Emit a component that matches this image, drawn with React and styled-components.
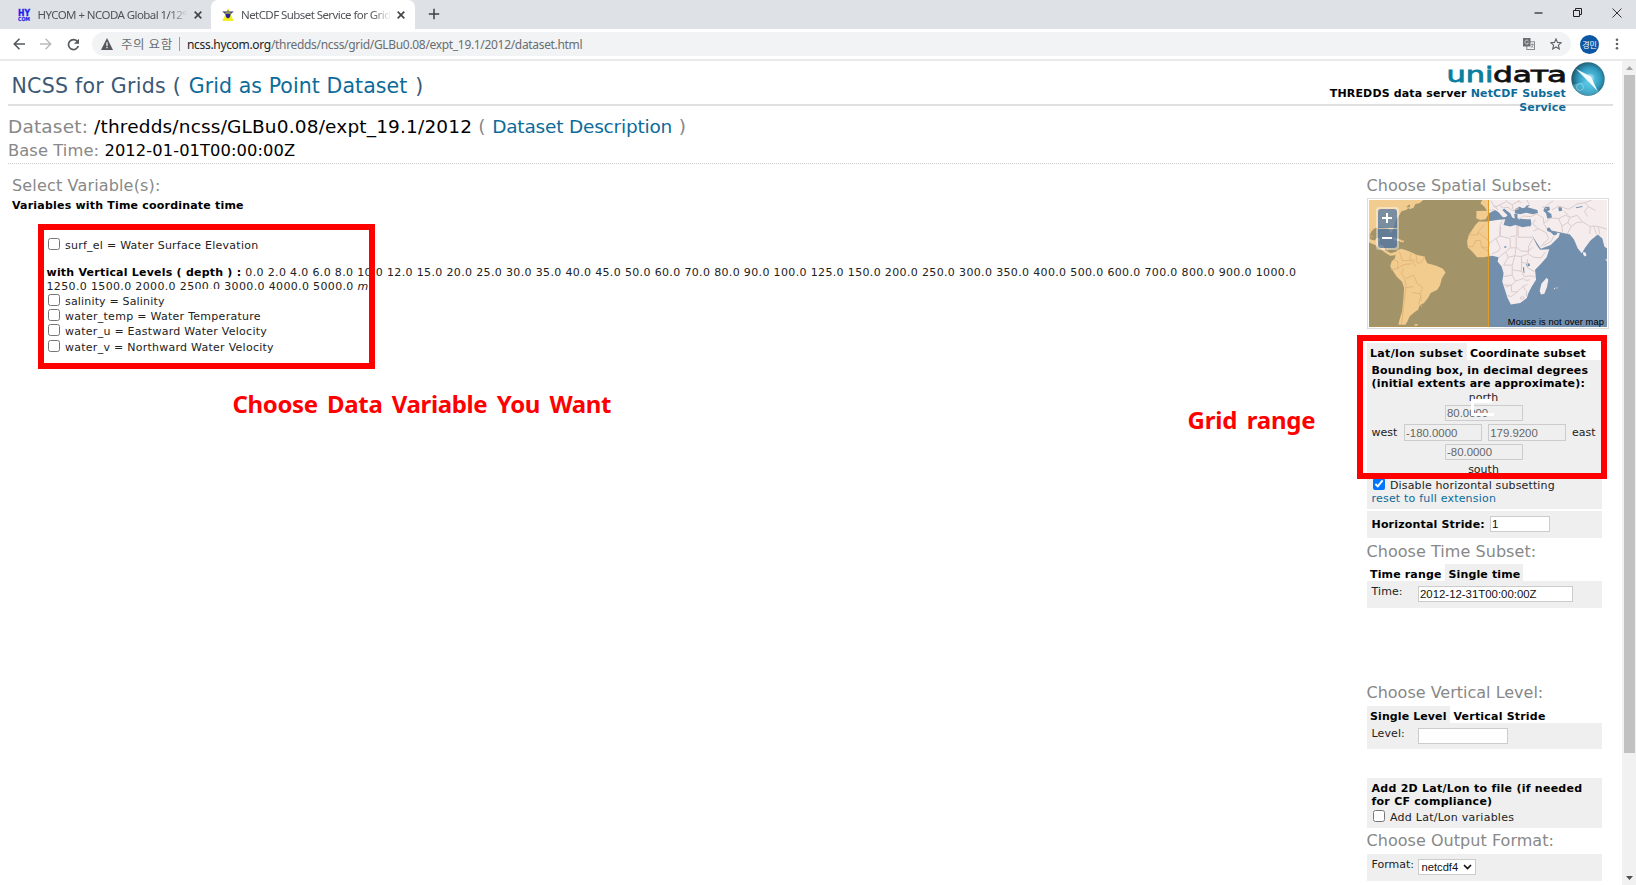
import React from "react";
import styled, { createGlobalStyle } from "styled-components";

const Global = createGlobalStyle`
  * { box-sizing: border-box; }
  html, body { margin: 0; padding: 0; background: #fff; }
  body { overflow: hidden; }
`;

const VERDANA = `Verdana, "DejaVu Sans", sans-serif`;
const UI = `"Malgun Gothic", "Noto Sans", "Noto Sans CJK KR", sans-serif`;

const Window = styled.div`
  position: relative;
  width: 1636px;
  height: 885px;
  overflow: hidden;
  display: flex;
  flex-direction: column;
  background: #fff;
  font-family: ${VERDANA};
  font-size: 11px;
  color: #222;
`;

/* ---------- browser chrome ---------- */
const TabStrip = styled.div`
  flex: none;
  display: flex;
  height: 29px;
  background: #dee1e6;
  font-family: ${UI};
`;
const BrowserTab = styled.div`
  display: flex;
  align-items: center;
  width: ${(p) => p.$width}px;
  padding-left: ${(p) => p.$pad}px;
  background: ${(p) => (p.$active ? "#fff" : "transparent")};
  border-radius: 7px 7px 0 0;
  svg { flex: none; overflow: visible; }
`;
const TabTitle = styled.span`
  width: 149px;
  margin-left: ${(p) => p.$gap}px;
  overflow: hidden;
  white-space: nowrap;
  font-size: 11.5px;
  line-height: 20px;
  letter-spacing: ${(p) => p.$ls}px;
  color: #505357;
  mask-image: linear-gradient(90deg, #000 88%, transparent 101%);
`;
const CloseIcon = styled.svg`
  margin-left: 7px;
`;
const NewTab = styled.svg`
  margin: 8px 0 0 13px;
`;
const WindowControls = styled.div`
  display: flex;
  align-items: center;
  gap: 30px;
  margin: 0 14px 4px auto;
`;
const Toolbar = styled.div`
  flex: none;
  display: flex;
  align-items: center;
  height: 32px;
  padding: 0 0 0 13px;
  border-bottom: 2px solid #e9eaeb;
  font-family: ${UI};
`;
const NavButtons = styled.div`
  display: flex;
  align-items: center;
  gap: 15px;
  width: 79px;
`;
const Omnibox = styled.div`
  display: flex;
  align-items: center;
  width: 1479px;
  height: 24px;
  padding: 0 9px 0 9px;
  border-radius: 12px;
  background: #f1f3f4;
  font-size: 12px;
  letter-spacing: ${(p) => p.$ls}px;
  color: #6a6e72;
`;
const Warning = styled.span`
  margin-left: 8px;
  width: 59px;
  line-height: 14px;
  border-right: 1px solid #9a9da0;
  font-family: "Noto Sans CJK KR", sans-serif;
  font-size: 12.5px;
  letter-spacing: 0.6px;
  white-space: nowrap;
`;
const Url = styled.span`
  margin-left: 7px;
  b { font-weight: 400; color: #222; }
`;
const OmniActions = styled.div`
  display: flex;
  align-items: center;
  gap: 15px;
  margin-left: auto;
`;
const Avatar = styled.div`
  display: grid;
  place-items: center;
  width: 19px;
  height: 19px;
  margin-left: 9px;
  border-radius: 50%;
  background: #0b57a4;
  color: #fff;
  font: 8px "Noto Sans CJK KR", sans-serif;
`;
const MenuDots = styled.svg`
  margin-left: 15px;
`;

/* ---------- page ---------- */
const Viewport = styled.div`
  flex: 1;
  min-height: 0;
  display: flex;
`;
const Page = styled.main`
  width: 1613px;
  padding-left: 8px;
`;
const Scrollbar = styled.div`
  display: flex;
  flex-direction: column;
  align-items: center;
  justify-content: space-between;
  width: 14px;
  margin-left: auto;
  padding: 5px 0 5px;
  background: #f1f1f1;
`;
const Thumb = styled.div`
  width: 11px;
  height: 678px;
  margin: 5px 0 auto;
  background: #c1c1c1;
`;
const Header = styled.header`
  display: flex;
  justify-content: space-between;
  height: 45px;
  border-bottom: 2px solid #e0e0e0;
`;
const Title = styled.h1`
  margin: 0;
  padding: 8px 0 0 3.5px;
  font-size: 20.5px;
  line-height: 35px;
  font-weight: 400;
  letter-spacing: ${(p) => p.$ls}px;
  color: #3b5874;
`;
const Link = styled.a`
  color: #0d6b99;
`;
const TitleLink = styled(Link)`
  margin: 0 ${(p) => p.$gap}px;
  letter-spacing: ${(p) => p.$ls}px;
`;
const Brand = styled.div`
  display: flex;
  align-items: flex-start;
  gap: 4.5px;
  height: 54px;
  margin-right: 8.5px;
`;
const BrandText = styled.div`
  display: flex;
  flex-direction: column;
  align-items: flex-end;
  width: 245px;
  svg { overflow: visible; }
`;
const Tagline = styled.div`
  margin-top: 3px;
  text-align: right;
  font-size: 11px;
  line-height: 13.5px;
  font-weight: 700;
  letter-spacing: ${(p) => p.$ls}px;
  color: #000;
`;
const Info = styled.section`
  padding-top: 9px;
  height: 58px;
  border-bottom: 1px dotted #ccc;
  color: #888;
`;
const InfoLine = styled.div`
  height: ${(p) => p.$h}px;
  margin-bottom: 1px;
  font-size: ${(p) => p.$size}px;
  line-height: ${(p) => p.$h}px;
  letter-spacing: ${(p) => p.$ls}px;
  b { font-weight: 400; color: #000; }
`;
const Columns = styled.div`
  display: flex;
  padding-top: 12px;
`;
const Variables = styled.section`
  width: 1358.5px;
  padding-left: 4px;
`;
const Subsets = styled.section`
  width: 242px;
`;
const SectionTitle = styled.h2`
  height: 20px;
  margin: ${(p) => p.$top || 0}px 0 0;
  font-size: 16px;
  line-height: 20px;
  font-weight: 400;
  letter-spacing: ${(p) => p.$ls || 0}px;
  white-space: nowrap;
  color: #888;
`;
const Strong = styled.div`
  margin-top: ${(p) => p.$top || 0}px;
  font-weight: 700;
  line-height: ${(p) => p.$lh || 13.5}px;
  letter-spacing: ${(p) => p.$ls || 0}px;
  white-space: nowrap;
  color: #000;
`;
const VariableList = styled.div`
  margin: 25px 0 0 35px;
`;
const CheckRow = styled.label`
  display: flex;
  height: ${(p) => p.$h || 15.33}px;
  margin-top: ${(p) => p.$top || 0}px;
  padding-left: 1px;
  line-height: 15.33px;
  letter-spacing: ${(p) => p.$ls || 0}px;
  white-space: nowrap;
`;
const CheckBox = styled.input.attrs({ type: "checkbox", readOnly: true })`
  flex: none;
  width: 12px;
  height: 12px;
  margin: 0 ${(p) => p.$gap || 5}px 0 0;
`;
const Levels = styled.div`
  width: 1290px;
  margin: 13px 0 0.5px -0.5px;
  line-height: 13.5px;
  letter-spacing: ${(p) => p.$ls}px;
  white-space: pre-line;
  b { color: #000; letter-spacing: ${(p) => p.$bls}px; }
`;
const MapFrame = styled.div`
  position: relative;
  width: 242px;
  height: 131px;
  margin-top: 2px;
  padding: 1px;
  border: 1px solid #ddd;
  > svg { display: block; }
`;
const MapCaption = styled.div`
  position: absolute;
  right: 3.5px;
  bottom: 0;
  font: 9.3px "Liberation Sans", Arial, sans-serif;
  letter-spacing: ${(p) => p.$ls}px;
  line-height: 11px;
  color: #000;
`;
const ZoomControl = styled.div`
  position: absolute;
  left: 8px;
  top: 8px;
  display: grid;
  gap: 1px;
  padding: 2px;
  border-radius: 3px;
  background: rgba(255, 255, 255, 0.4);
`;
const ZoomButton = styled.div`
  display: grid;
  place-items: center;
  width: 19px;
  height: 19px;
  border-radius: ${(p) => (p.$first ? "3px 3px 0 0" : "0 0 3px 3px")};
  background: rgba(0, 60, 136, 0.5);
  svg { margin-bottom: 2px; }
`;
const Tabs = styled.div`
  display: flex;
  height: 17px;
  margin-top: ${(p) => p.$top}px;
`;
const FormTab = styled.div`
  width: ${(p) => p.$width}px;
  padding: 4px 0 0 3.5px;
  background: ${(p) => (p.$active ? "#efefef" : "transparent")};
  font-weight: 700;
  line-height: 13px;
  letter-spacing: ${(p) => p.$ls || 0}px;
  white-space: nowrap;
  color: #000;
`;
const Panel = styled.div`
  width: 235px;
  height: ${(p) => p.$h}px;
  margin-top: ${(p) => p.$top || 0}px;
  padding: ${(p) => p.$pad || 4}px 0 0 5px;
  background: #efefef;
  line-height: 13.5px;
`;
const Bounds = styled.div`
  display: flex;
  flex-direction: column;
  align-items: center;
  width: 224px;
  height: 86px;
`;
const South = styled.span`
  margin-top: 3px;
`;
const BoundsRow = styled.div`
  display: flex;
  justify-content: space-between;
  align-items: center;
  width: 224px;
  margin: 3px 0;
`;
const Field = styled.input.attrs({ readOnly: true })`
  flex: none;
  width: ${(p) => p.$w}px;
  height: ${(p) => p.$h || 16}px;
  margin: ${(p) => p.$top || 0}px 0 0;
  padding: 0 2px 0 1.5px;
  border: 1px solid #ccc;
  border-radius: 0;
  background: ${(p) => (p.disabled ? "#efefef" : "#fff")};
  color: ${(p) => (p.disabled ? "#666" : "#111")};
  font: 11.4px "Liberation Sans", Arial, sans-serif;
`;
const Labeled = styled.div`
  display: flex;
  align-items: flex-start;
`;
const Label = styled.span`
  width: ${(p) => p.$w}px;
  margin-top: ${(p) => p.$top || 0}px;
  font-weight: ${(p) => (p.$bold ? 700 : 400)};
  letter-spacing: ${(p) => p.$ls || 0}px;
  white-space: nowrap;
  color: ${(p) => (p.$bold ? "#000" : "#222")};
`;
const ResetLink = styled(Link)`
  letter-spacing: 0.2px;
`;
const Select = styled.div`
  display: flex;
  align-items: center;
  justify-content: space-between;
  width: 58px;
  height: 16px;
  margin-top: 1px;
  padding: 0 3px;
  border: 1px solid #ccc;
  background: #fff;
  color: #111;
  font: 11.2px "Liberation Sans", Arial, sans-serif;
`;

/* ---------- annotations laid over the page ---------- */
const Marker = styled.div`
  position: absolute;
  left: ${(p) => p.$x}px;
  top: ${(p) => p.$y}px;
  width: ${(p) => p.$w}px;
  height: ${(p) => p.$h}px;
  border: 6px solid #f00;
`;
const Note = styled.div`
  position: absolute;
  left: ${(p) => p.$x}px;
  top: ${(p) => p.$y}px;
  color: #f00;
  font: 700 24px/32px "Malgun Gothic", "Noto Sans", sans-serif;
  letter-spacing: ${(p) => p.$ls}px;
  word-spacing: 3.5px;
  white-space: nowrap;
`;
const Patch = styled.div`
  position: absolute;
  left: ${(p) => p.$x}px;
  top: ${(p) => p.$y}px;
  width: ${(p) => p.$w}px;
  height: ${(p) => p.$h}px;
  background: #fff;
`;

const Close = () => (
  <CloseIcon width="8" height="8" viewBox="0 0 7 7">
    <path d="M.6.6l5.8 5.8M6.4.6L.6 6.4" stroke="#404347" strokeWidth="1.4" />
  </CloseIcon>
);

const WorldMap = () => (
  <svg width="238" height="127" viewBox="84 90 718 382" preserveAspectRatio="none">
    <rect x="84" y="90" width="718" height="382" fill="#728fae" />
    <g fill="#f5eded">
      <path d="M84 90H226L218 98 205 104 196 112 206 112 196 120 182 124 174 138 165 150 158 175 150 190 142 176 118 172 100 176 92 184 86 196 88 208 100 212 108 204 118 204 114 222 128 228 134 242 150 250 165 246 172 250 162 256 148 258 132 248 116 236 104 226 84 218Z" />
      <path d="M204 96l10-6h34l-12 10-12 2-6 12-14 4 4-12zM150 202l16 2 16 6-4 4-16-2zM178 212l12 0-2 5-10-1z" />
      <path d="M167 243l13-6 12 3 20 7 15 8 23 5 10 20 27 8 20 9 8 11-11 17-6 22-8 13-20 10-8 15-12 15-13 7-5 13-10 7-15 13-7 15-6 10H173l3-15 8-25 4-40 2-30-6-18-17-17-13-20-6-10 4-15 10-10zM222 464l10-1-3 5-8 0z" />
      <path d="M405 165L415 155 440 155 470 150 495 148 490 165 510 170 525 165 548 172 568 168 572 185 580 205 590 225 600 240 628 238 620 262 600 285 585 300 588 330 575 350 565 370 560 385 540 400 512 404 502 385 494 360 486 335 490 310 484 290 472 275 475 262 455 258 430 262 410 262 395 245 382 232 380 215 385 195 395 180Z" />
      <path d="M426 90L420 100 432 110 440 122 408 123 408 146 420 150 436 148 446 130 464 120 474 126 488 142 497 141 502 136 486 120 492 116 510 130 516 143 524 146 522 132 532 130 532 146 560 148 572 148 574 164 564 178 578 200 602 237 632 225 656 202 660 190 640 186 630 178 618 172 634 182 674 190 690 194 702 208 714 236 726 250 736 234 752 212 774 194 788 206 794 230 802 236V90Z" />
      <path d="M612 333l8-9 5 6-4 22-8 20-10 2-4-10 5-22zM730 246l8 3 2 8-5 3-5-6zM790 262l6 4 6 10v-6zM642 353l4 3-4 3zM650 352l4 3-4 2z" />
    </g>
    <g fill="#728fae">
      <path d="M524 118l14-8 10 5 8-3 2-5 12-3-8 8 30 8 2 9-16 4-20-5-18 5-16-4zM614 110l14 0 2 10-8 4 12 8 2 12-14 2-4-16-8-8zM655 112l10 0 2 10-10 2zM708 112l20-4v3l-20 4zM620 174l8-1 8 10 14 4 2 6-10 4-10-10-10-4zM558 282l10-2 2 8-10 3zM548 292l4 0 1 18-3-2zM492 230l6-2 0 6-6 0z" />
    </g>
    <g fill="none" stroke="#d8c8c8" strokeWidth="2.8" strokeLinejoin="round">
      <path d="M385 195h27v-8l30 22 6 10 32-22V164l6-10M412 187l20-22M384 230h14l8-18h14l4 20h18M448 219l-6 24-18-11M442 243l8 16M466 204l14 30-6 10-20 8M480 170l-2 28 32 8v28h18M510 200l20-2V166M534 168v34h44M528 202v30l16 12 20 0 14-12M578 206l-12 22-2 24 16 10 24 2 12-18M510 234l-14 12-22 18M496 246l8 16 20-4 4-26M504 262l-14 24h26l8-28 18 2 20-6M516 286v30l-26 4M516 300l28 4 8 16 22-2 14 4M544 304v-44M516 316l10 18-12 12h-24M526 334l24-8 8 6 12-2M514 346v20h18l16-16 14-6M532 366l-18 14-12-2M548 350l12 16-2 14M562 268v26l22 12M562 280l-18-2M496 352l18-6M540 384l8-5 4 6-8 5z" />
      <path d="M446 120l18 0M452 92l10 20 14-6 20-10 4-6M464 106l8 14M476 106l14 8 14-2 12 10 20-6M500 96l16 8 18-10 10 4M516 104l2 14M534 94l4-4M560 90l8 14M536 150l12-12 24 2 18-8 20 12M586 148l-8 14 16 14 24 12 8 18-24 24M594 176l-14 8M610 144l2 20 10 12M612 160l20-16 24 2 10 22 2 22M656 146l20-10 16 6 20-6M666 168l18-10 6-16M684 158l10 12-12 22M712 136l16 20 24 14 10-2 14 2 4 24M694 170l16-12 18-2M752 170l-2 22M640 92l-20 14M636 120l20-12 30 10 26-16 24-4 20-8M672 124l14 12M736 98l10 12 22 12M746 110l-12 14 10 16M762 168l8 24M776 170l26 8M606 110l14 6M640 200l-6 14-24 14" />
      <path d="M176 246l8 26 28 0 14 18M212 248l-6 18 18 8M226 256l4 24 12-2 10-20M160 270l12 6-2 20-20 4M170 296l20-12 22-2M188 296l-6 16 10 14 4 24M196 326l22-10 12 26 16 12-8 18 4 22M196 350l-4 30-6 50-4 36M218 350l-22 4M238 372l-24-4M242 376l-8 24 10 12M96 202l-12-8M142 234l-4 10" />
    </g>
    <path d="M84 90H445V472H84Z" fill="#ee9900" fillOpacity=".4" />
    <path d="M444.500 90V472" stroke="#e39a22" strokeWidth="3" />
    <path d="M84 471H445" stroke="#e39a22" strokeWidth="1.500" opacity=".6" />
  </svg>
);

const LEVELS =
  "0.0 2.0 4.0 6.0 8.0 10.0 12.0 15.0 20.0 25.0 30.0 35.0 40.0 45.0 50.0 60.0 70.0 80.0 90.0 100.0 125.0 150.0 200.0 250.0 300.0 350.0 400.0 500.0 600.0 700.0 800.0 900.0 1000.0\n1250.0 1500.0 2000.0 2500.0 3000.0 4000.0 5000.0 ";

const VARS = [
  ["salinity = Salinity", 0.17],
  ["water_temp = Water Temperature", 0.28],
  ["water_u = Eastward Water Velocity", 0.26],
  ["water_v = Northward Water Velocity", 0.26],
];

export default function App() {
  return (
    <Window>
      <Global />
      <TabStrip>
        <BrowserTab $width={211} $pad={17.5}>
          <svg width="14" height="14" viewBox="0 0 14 14" fill="#1c1cf0" fontFamily="DejaVu Sans" fontWeight="700">
            <text x="0" y="7.500" fontSize="9.300" stroke="#1c1cf0" strokeWidth=".3" textLength="12" lengthAdjust="spacingAndGlyphs">HY</text>
            <text x="0" y="13.300" fontSize="5.500" stroke="#1c1cf0" strokeWidth=".2" textLength="12" lengthAdjust="spacingAndGlyphs">COM</text>
          </svg>
          <TabTitle $gap={6} $ls={-0.56}>HYCOM + NCODA Global 1/12°</TabTitle>
          <Close />
        </BrowserTab>
        <BrowserTab $width={204} $pad={11} $active>
          <svg width="12" height="13" viewBox="0 0 11 12">
            <path d="M5.500 0L7.200 4 8.400 7 10.800 12H.2L2.600 7 3.800 4z" fill="#f3ec1e" />
            <path d="M.2 3.200H10.800L8 5.600 7.200 8.500 5.500 9.800 3.800 8.500 3 5.600z" fill="#23238c" />
            <path d="M1.500 4.600L4 3.800 5.500 1.500 7 3.800 9.500 4.600 7.500 5.500H3.500z" fill="#8d8a58" />
          </svg>
          <TabTitle $gap={7} $ls={-0.57}>NetCDF Subset Service for Grids</TabTitle>
          <Close />
        </BrowserTab>
        <NewTab width="12" height="12" viewBox="0 0 12 12">
          <path d="M6 .8V11.200M.8 6H11.200" stroke="#3c4043" strokeWidth="1.500" />
        </NewTab>
        <WindowControls>
          <svg width="9" height="9" viewBox="0 0 9 9"><path d="M.5 5H8.500" stroke="#222" strokeWidth="1.200" /></svg>
          <svg width="9" height="9" viewBox="0 0 9 9" fill="none" stroke="#222"><path d="M.5 2.500h6v6h-6zM2.500 2.500V.5h6v6H6.500" /></svg>
          <svg width="10" height="10" viewBox="0 0 10 10"><path d="M.5.5l9 9M9.500.5l-9 9" stroke="#333" /></svg>
        </WindowControls>
      </TabStrip>
      <Toolbar>
        <NavButtons>
          <svg width="12" height="12" viewBox="0 0 12 12" fill="none" stroke="#555a5e" strokeWidth="1.600"><path d="M12 6H1.500M6.500 .8L1.300 6l5.200 5.200" /></svg>
          <svg width="12" height="12" viewBox="0 0 12 12" fill="none" stroke="#b9bbbe" strokeWidth="1.500"><path d="M0 6H10.500M5.500 .8l5.200 5.200-5.200 5.200" /></svg>
          <svg width="13" height="13" viewBox="0 0 13 13"><path d="M10.300 3.300A5 5 0 1 0 11.300 8" fill="none" stroke="#555a5e" strokeWidth="1.700" /><path d="M12 .8V5.800H7z" fill="#555a5e" /></svg>
        </NavButtons>
        <Omnibox $ls={-0.32}>
          <svg width="12" height="12" viewBox="0 0 11 11"><path d="M5.500 0L11 11H0z" fill="#55585c" /><path d="M5.500 4v3.500M5.500 8.300v1.200" stroke="#f1f3f4" strokeWidth="1.200" /></svg>
          <Warning>주의 요함</Warning>
          <Url><b>ncss.hycom.org</b>/thredds/ncss/grid/GLBu0.08/expt_19.1/2012/dataset.html</Url>
          <OmniActions>
            <svg width="12" height="12" viewBox="0 0 12 12">
              <rect x="3.800" y="3.800" width="7.700" height="7.700" fill="#f1f3f4" stroke="#8a8d90" />
              <rect x="0" y="0" width="7.500" height="8.500" fill="#6a6e72" />
              <path d="M5.500 3A2 2 0 1 0 5.500 5.200H4" fill="none" stroke="#dcdedf" strokeWidth=".8" />
              <path d="M8 6.500h2.800M9.400 5.500v1M10.400 6.800L8 9.800M8.300 7.500l2 2.200" fill="none" stroke="#777" strokeWidth=".7" />
            </svg>
            <svg width="12" height="12" viewBox="0 0 12 12"><path d="M6 .9L7.500 4.400 11.300 4.700 8.400 7.200 9.300 11 6 9 2.700 11 3.600 7.200.7 4.700 4.500 4.400z" fill="none" stroke="#5f6368" strokeWidth="1.100" /></svg>
          </OmniActions>
        </Omnibox>
        <Avatar>경민</Avatar>
        <MenuDots width="6" height="12" viewBox="0 0 6 12" fill="#5f6368"><circle cx="3" cy="1.700" r="1.300" /><circle cx="3" cy="6" r="1.300" /><circle cx="3" cy="10.300" r="1.300" /></MenuDots>
      </Toolbar>

      <Viewport>
        <Page>
          <Header>
            <Title $ls={0.27}>NCSS for Grids ( <TitleLink $ls={0.08} $gap={1}>Grid as Point Dataset</TitleLink> )</Title>
            <Brand>
              <BrandText>
                <svg width="119" height="23" viewBox="0 0 119 23" fontFamily="DejaVu Sans" fontSize="22">
                  <text x="-.5" y="21" fill="#0a7f9e" stroke="#0a7f9e" strokeWidth=".8" textLength="47" lengthAdjust="spacingAndGlyphs">uni</text>
                  <text x="46" y="21" fill="#111" stroke="#111" strokeWidth=".8" textLength="39" lengthAdjust="spacingAndGlyphs">da</text>
                  <text x="84" y="21" fill="#111" stroke="#111" strokeWidth=".8" fontSize="16.500" textLength="17" lengthAdjust="spacingAndGlyphs">T</text>
                  <text x="100" y="21" fill="#111" stroke="#111" strokeWidth=".8" textLength="20" lengthAdjust="spacingAndGlyphs">a</text>
                </svg>
                <Tagline $ls={0.15}>THREDDS data server <Link>NetCDF Subset Service</Link></Tagline>
              </BrandText>
              <svg width="34" height="36" viewBox="0 0 34 36">
                <defs>
                  <radialGradient id="globe" cx=".55" cy=".5" r=".55">
                    <stop offset="0" stopColor="#6fd0ea" /><stop offset=".6" stopColor="#2f9cc0" /><stop offset="1" stopColor="#215468" />
                  </radialGradient>
                </defs>
                <circle cx="17" cy="18" r="16.700" fill="url(#globe)" />
                <path d="M1.500 24A16.500 16.500 0 0 0 28 30L17 19z" fill="#62cdec" opacity=".5" />
                <circle cx="19" cy="17" r="4" fill="#bdeefa" opacity=".4" />
                <path d="M5 8L20 15.500 26.500 30 16.500 19.500z" fill="#f4fcff" />
                <circle cx="9" cy="26" r="3.500" fill="none" stroke="#a6e3f4" strokeWidth=".8" opacity=".7" />
              </svg>
            </Brand>
          </Header>
          <Info>
            <InfoLine $h={24} $size={18.5} $ls={0.17}>Dataset: <b>/thredds/ncss/GLBu0.08/expt_19.1/2012</b> ( <TitleLink $ls={-0.2} $gap={0.5}>Dataset Description</TitleLink> )</InfoLine>
            <InfoLine $h={22} $size={16.3} $ls={0.1}>Base Time: <b>2012-01-01T00:00:00Z</b></InfoLine>
          </Info>
          <Columns>
            <Variables>
              <SectionTitle $ls={0.16}>Select Variable(s):</SectionTitle>
              <Strong $top={3} $lh={14} $ls={0.2}>Variables with Time coordinate time</Strong>
              <VariableList>
                <CheckRow $ls={0.25}><CheckBox />surf_el = Water Surface Elevation</CheckRow>
                <Levels $ls={0.35} $bls={0.22}><b>with Vertical Levels ( depth ) : </b>{LEVELS}<i>m</i></Levels>
                {VARS.map(([name, ls]) => (
                  <CheckRow key={name} $ls={ls}><CheckBox />{name}</CheckRow>
                ))}
              </VariableList>
            </Variables>
            <Subsets>
              <SectionTitle $ls={0.04}>Choose Spatial Subset:</SectionTitle>
              <MapFrame>
                <WorldMap />
                <ZoomControl>
                  <ZoomButton $first><svg width="12" height="12" viewBox="0 0 12 12"><path d="M6 1V11M1 6H11" stroke="#fff" strokeWidth="2" /></svg></ZoomButton>
                  <ZoomButton><svg width="12" height="12" viewBox="0 0 12 12"><path d="M1 6H11" stroke="#fff" strokeWidth="2" /></svg></ZoomButton>
                </ZoomControl>
                <MapCaption $ls={0.1}>Mouse is not over map</MapCaption>
              </MapFrame>
              <Tabs $top={14}>
                <FormTab $active $width={100} $ls={0.34}>Lat/lon subset</FormTab>
                <FormTab $width={130} $ls={0.14}>Coordinate subset</FormTab>
              </Tabs>
              <Panel $h={149}>
                <Strong $lh={13.3} $ls={0.18}>Bounding box, in decimal degrees<br />(initial extents are approximate):</Strong>
                <Bounds>
                  <span>north</span>
                  <Field $w={78} disabled value="80.0000" $top={1} />
                  <BoundsRow>
                    <span>west</span>
                    <Field $w={78} $h={17} disabled value="-180.0000" />
                    <Field $w={78} $h={17} disabled value="179.9200" />
                    <span>east</span>
                  </BoundsRow>
                  <Field $w={78} disabled value="-80.0000" />
                  <South>south</South>
                </Bounds>
                <CheckRow $h={14} $top={1} $ls={0.15}><CheckBox $gap={5.5} checked />Disable horizontal subsetting</CheckRow>
                <ResetLink>reset to full extension</ResetLink>
              </Panel>
              <Panel $h={27} $top={2} $pad={5}>
                <Labeled><Label $w={118} $bold $top={2} $ls={0.18}>Horizontal Stride:</Label><Field $w={60} value="1" /></Labeled>
              </Panel>
              <SectionTitle $top={3.5} $ls={0.05}>Choose Time Subset:</SectionTitle>
              <Tabs $top={2.5}>
                <FormTab $width={78.5} $ls={0.15}>Time range</FormTab>
                <FormTab $active $width={78} $ls={0.14}>Single time</FormTab>
              </Tabs>
              <Panel $h={26.5}>
                <Labeled><Label $w={46} $ls={0.1}>Time:</Label><Field $w={155} $top={1} value="2012-12-31T00:00:00Z" /></Labeled>
              </Panel>
              <SectionTitle $top={75.5}>Choose Vertical Level:</SectionTitle>
              <Tabs $top={2.5}>
                <FormTab $active $width={83.5} $ls={0.1}>Single Level</FormTab>
                <FormTab $width={110} $ls={0.2}>Vertical Stride</FormTab>
              </Tabs>
              <Panel $h={26.5}>
                <Labeled><Label $w={46} $ls={0.1}>Level:</Label><Field $w={90} $top={1} value="" /></Labeled>
              </Panel>
              <Panel $h={50} $top={29}>
                <Strong $lh={13.3} $ls={0.26}>Add 2D Lat/Lon to file (if needed<br />for CF compliance)</Strong>
                <CheckRow $top={1.4} $ls={0.25}><CheckBox $gap={5.5} />Add Lat/Lon variables</CheckRow>
              </Panel>
              <SectionTitle $top={3} $ls={0.04}>Choose Output Format:</SectionTitle>
              <Panel $h={26.5} $top={3}>
                <Labeled>
                  <Label $w={46}>Format:</Label>
                  <Select>netcdf4<svg width="9" height="6" viewBox="0 0 9 6"><path d="M1 1l3.500 3.500L8 1" fill="none" stroke="#111" strokeWidth="1.700" /></svg></Select>
                </Labeled>
              </Panel>
            </Subsets>
          </Columns>
        </Page>
        <Scrollbar>
          <svg width="7" height="4" viewBox="0 0 7 4"><path d="M3.500 0L7 4H0z" fill="#a3a3a3" /></svg>
          <Thumb />
          <svg width="7" height="4" viewBox="0 0 7 4"><path d="M3.500 4L7 0H0z" fill="#505050" /></svg>
        </Scrollbar>
      </Viewport>

      <Patch $x={194} $y={289} $w={26} $h={4} />
      <Patch $x={1471} $y={399} $w={21} $h={4} />
      <Patch $x={1471} $y={399} $w={2.5} $h={16} />
      <Patch $x={1471} $y={413} $w={23} $h={3} />
      <Marker $x={38} $y={224} $w={337} $h={145} />
      <Marker $x={1357} $y={335} $w={250} $h={144} />
      <Note $x={232.5} $y={388} $ls={-0.36}>Choose Data Variable You Want</Note>
      <Note $x={1187.5} $y={404} $ls={-0.2}>Grid range</Note>
    </Window>
  );
}
